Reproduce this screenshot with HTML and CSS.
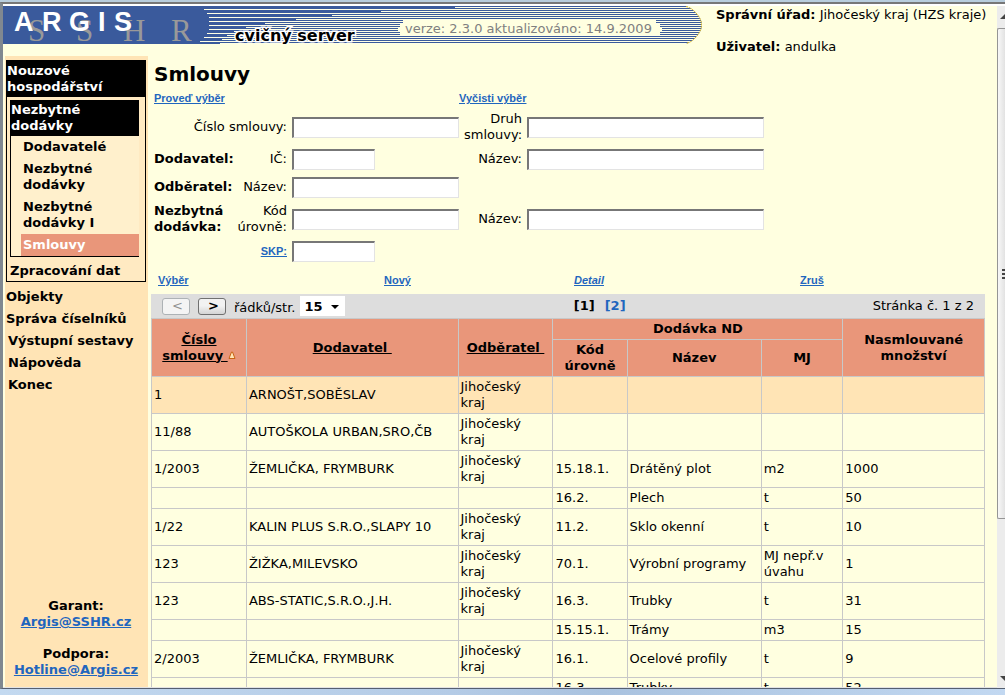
FILE: index.html
```html
<!DOCTYPE html>
<html lang="cs">
<head>
<meta charset="utf-8">
<title>ARGIS – Smlouvy</title>
<link rel="stylesheet" href="styles.css">
</head>
<body>
<div class="window">
  <div class="frame">
    <div class="page">
      <header class="header">
        <svg class="banner" width="700" height="38" viewBox="3 6 700 38" role="img" aria-label="ARGIS SSHR">
          <defs>
            <clipPath id="shape"><path d="M3 6H686Q692 8 696 13Q702 19 702 25Q702 31 696 37Q692 42 686 44H3Z"/></clipPath>
          </defs>
          <g clip-path="url(#shape)">
            <rect x="3" y="6" width="700" height="38" fill="#3a5a9c"/>
            <path stroke="#ffffe6" shape-rendering="crispEdges" d="M455 7.5H702M204 9.5H702M381 11.5H702M207 13.5H702M332 15.5H702M209 17.5H702M296 19.5H702M209 21.5H702M265 23.5H702M209 25.5H702M246 27.5H702M209 29.5H702M234 31.5H702M207 33.5H702M227 35.5H702M204 37.5H702M222 39.5H702M200 41.5H702M220 43.5H702"/>
          </g>
          <path d="M686 6.5Q692 8 696 13Q701.500 19 701.500 25Q701.500 31 696 37Q692 42 686 43.500" fill="none" stroke="#e8c020" stroke-dasharray="2 1"/>
          <path d="M403 20H656V24H660V27H662V31H660V35H400V31H398V27H400V24H403Z" fill="#ffffe0"/>
          <text class="sshr" x="28 76 123 171" y="41">SSHR</text>
          <text class="argis" x="14 42 69 98 114" y="31">ARGIS</text>
          <text class="training" x="235" y="41">cvičný server</text>
          <text class="version" x="405" y="33">verze: 2.3.0 aktualizováno: 14.9.2009</text>
        </svg>
        <div class="account">
          <p><b>Správní úřad:</b> Jihočeský kraj (HZS kraje)</p>
          <p><b>Uživatel:</b> andulka</p>
        </div>
      </header>
      <div class="columns">
        <aside class="sidebar">
          <nav>
            <div class="group">
              <div class="group-title">Nouzové hospodářství</div>
              <div class="subgroup">
                <div class="group-title">Nezbytné dodávky</div>
                <ul class="submenu">
                  <li><a href="#">Dodavatelé</a></li>
                  <li><a href="#">Nezbytné dodávky</a></li>
                  <li><a href="#">Nezbytné dodávky I</a></li>
                  <li><a class="current" href="#">Smlouvy</a></li>
                </ul>
              </div>
              <a class="group-link" href="#">Zpracování dat</a>
            </div>
            <ul class="menu">
              <li><a href="#">Objekty</a></li>
              <li><a href="#">Správa číselníků</a></li>
              <li><a class="leaf" href="#">Výstupní sestavy</a></li>
              <li><a class="leaf" href="#">Nápověda</a></li>
              <li><a class="leaf" href="#">Konec</a></li>
            </ul>
          </nav>
          <div class="contacts">
            <p>Garant:<br><a href="#">Argis@SSHR.cz</a></p>
            <p>Podpora:<br><a href="#">Hotline@Argis.cz</a></p>
          </div>
        </aside>
        <main class="content">
          <h1>Smlouvy</h1>
          <form class="search">
            <div class="search-actions">
              <a class="action" href="#">Proveď výběr</a>
              <a class="action" href="#">Vyčisti výběr</a>
            </div>
            <div class="row tall">
              <label class="wide-label" for="cislo">Číslo smlouvy:</label>
              <input id="cislo" type="text">
              <label for="druh">Druh smlouvy:</label>
              <input id="druh" class="long" type="text">
            </div>
            <div class="row">
              <b>Dodavatel:</b>
              <label for="ic">IČ:</label>
              <input id="ic" class="short" type="text">
              <label for="dodavatel">Název:</label>
              <input id="dodavatel" class="long" type="text">
            </div>
            <div class="row">
              <b>Odběratel:</b>
              <label for="odberatel">Název:</label>
              <input id="odberatel" type="text">
            </div>
            <div class="row tall">
              <b>Nezbytná dodávka:</b>
              <label for="kod">Kód úrovně:</label>
              <input id="kod" type="text">
              <label for="dodavka">Název:</label>
              <input id="dodavka" class="long" type="text">
            </div>
            <div class="row">
              <label class="wide-label" for="skp"><a class="action" href="#">SKP:</a></label>
              <input id="skp" class="short" type="text">
            </div>
          </form>
          <section class="listing">
            <div class="list-actions">
              <a class="action" href="#">Výběr</a>
              <a class="action" href="#">Nový</a>
              <a class="action detail" href="#">Detail</a>
              <a class="action" href="#">Zruš</a>
            </div>
            <div class="pager">
              <div class="pager-left">
                <button type="button" disabled>&lt;</button>
                <button type="button">&gt;</button>
                <label for="rows">řádků/str.</label>
                <span class="select"><select id="rows"><option>15</option><option>30</option></select></span>
              </div>
              <div class="pages"><b>[1]</b><a href="#">[2]</a></div>
              <div class="count">Stránka č. 1 z 2</div>
            </div>
            <table class="grid">
              <colgroup><col class="c1"><col class="c2"><col class="c3"><col class="c4"><col class="c5"><col class="c6"><col class="c7"></colgroup>
              <thead>
                <tr>
                  <th rowspan="2"><a href="#">Číslo smlouvy&nbsp;</a><svg class="sort" width="8" height="9" viewBox="0 0 8 9"><path d="M3.500 1L1 7.500H7L4.500 1Z" fill="#ffe4b5" stroke="#c86414"/></svg></th>
                  <th rowspan="2"><a href="#">Dodavatel&nbsp;</a></th>
                  <th rowspan="2"><a href="#">Odběratel&nbsp;</a></th>
                  <th colspan="3">Dodávka ND</th>
                  <th rowspan="2">Nasmlouvané množství</th>
                </tr>
                <tr><th>Kód úrovně</th><th>Název</th><th>MJ</th></tr>
              </thead>
              <tbody>
                <tr class="selected"><td>1</td><td>ARNOŠT,SOBĚSLAV</td><td>Jihočeský kraj</td><td></td><td></td><td></td><td></td></tr>
                <tr><td>11/88</td><td>AUTOŠKOLA URBAN,SRO,ČB</td><td>Jihočeský kraj</td><td></td><td></td><td></td><td></td></tr>
                <tr><td>1/2003</td><td>ŽEMLIČKA, FRYMBURK</td><td>Jihočeský kraj</td><td>15.18.1.</td><td>Drátěný plot</td><td>m2</td><td>1000</td></tr>
                <tr><td></td><td></td><td></td><td>16.2.</td><td>Plech</td><td>t</td><td>50</td></tr>
                <tr><td>1/22</td><td>KALIN PLUS S.R.O.,SLAPY 10</td><td>Jihočeský kraj</td><td>11.2.</td><td>Sklo okenní</td><td>t</td><td>10</td></tr>
                <tr><td>123</td><td>ŽIŽKA,MILEVSKO</td><td>Jihočeský kraj</td><td>70.1.</td><td>Výrobní programy</td><td>MJ nepř.v úvahu</td><td>1</td></tr>
                <tr><td>123</td><td>ABS-STATIC,S.R.O.,J.H.</td><td>Jihočeský kraj</td><td>16.3.</td><td>Trubky</td><td>t</td><td>31</td></tr>
                <tr><td></td><td></td><td></td><td>15.15.1.</td><td>Trámy</td><td>m3</td><td>15</td></tr>
                <tr><td>2/2003</td><td>ŽEMLIČKA, FRYMBURK</td><td>Jihočeský kraj</td><td>16.1.</td><td>Ocelové profily</td><td>t</td><td>9</td></tr>
                <tr><td></td><td></td><td></td><td>16.3.</td><td>Trubky</td><td>t</td><td>52</td></tr>
              </tbody>
            </table>
          </section>
        </main>
      </div>
    </div>
    <div class="scrollbar">
      <svg width="8" height="22" viewBox="0 0 8 22"><path d="M3 13L8 8V13Z" fill="#444"/></svg>
      <div class="thumb"><svg width="3" height="10" viewBox="0 0 3 10"><path d="M0 1H3M0 5H3M0 9H3" stroke="#444" stroke-width="2"/></svg></div>
      <svg class="down" width="8" height="16" viewBox="0 0 8 16"><path d="M3 4L8 9V4Z" fill="#444"/></svg>
    </div>
  </div>
  <div class="desktop"></div>
</div>
</body>
</html>
```
FILE: styles.css
```css
* { box-sizing: border-box; }

body {
  margin: 0;
  background: #ffffe0;
  color: #000;
  font: 13px/16px Verdana, "DejaVu Sans", sans-serif;
}

p, ul, h1 { margin: 0; padding: 0; }
ul { list-style: none; }
a { color: #1f66be; }

.window {
  display: flex;
  flex-direction: column;
  height: 100vh;
  overflow: hidden;
  border-top: 2px solid #b8cddd;
}

.frame {
  display: flex;
  flex: 1;
  min-height: 0;
  border-top: 2px solid #777;
  border-left: 3px solid #808890;
  border-bottom: 1px solid #555f70;
}

.page {
  display: flex;
  flex-direction: column;
  flex: 1;
  min-width: 0;
  border-top: 2px solid #fff;
  border-bottom: 1px solid #e3e3e3;
  overflow: hidden;
}

.desktop {
  height: 6px;
  background: linear-gradient(90deg, #c3d9f0, #b4cbe6 45%, #a9c2df 60%, #c2d8f1);
}

/* Header */
.header { display: flex; height: 50px; }
.banner { flex: none; }
.argis { font: bold 27px "Liberation Sans", Arial, sans-serif; fill: #fff; }
.sshr { font: 31px "Liberation Serif", "Times New Roman", serif; fill: #999; }
.training {
  font: bold 16px "DejaVu Sans", Verdana, sans-serif;
  fill: #000;
  stroke: #fff;
  stroke-width: 3px;
  paint-order: stroke;
}
.version { font: 13px Verdana, "DejaVu Sans", sans-serif; fill: #808080; }
.account { padding: 1px 0 0 13px; white-space: nowrap; }
.account p + p { margin-top: 16px; }

/* Sidebar */
.columns { display: flex; flex: 1; min-height: 0; }

.sidebar {
  display: flex;
  flex-direction: column;
  flex: none;
  width: 143px;
  margin-left: 2px;
  padding: 4px 2px 9px 1px;
  background: #ffe4b5;
  font-weight: bold;
}

.sidebar nav a { display: block; color: #000; text-decoration: none; }

.group { border: 1px solid #000; background: #ffeac2; }
.group-title { padding: 2px 0; background: #000; color: #fff; }
.subgroup {
  margin: 3px 6px 0 3px;
  border: solid #000;
  border-width: 0 0 1px 1px;
  background: #fff0cc;
}
.submenu { padding-left: 10px; }
.submenu a { padding: 3px 2px; }
.submenu .current { background: #e9967a; color: #fff; }
.sidebar .group-link { padding: 6px 3px 2px; }
.menu { padding-top: 4px; }
.menu a { padding: 3px 0; }
.menu .leaf { padding-left: 2px; }

.contacts { margin-top: auto; text-align: center; }
.contacts p + p { margin-top: 16px; }

/* Search form */
.content { flex: 1; min-width: 0; padding: 6px 12px 0 3px; }
h1 { padding-left: 3px; font-size: 20px; line-height: 24px; }

.action {
  font: bold 11px/16px "Liberation Sans", Arial, sans-serif;
}

.search { padding-left: 3px; }
.search-actions {
  display: grid;
  grid-template-columns: 305px 1fr;
  padding: 4px 0 3px;
}
.row {
  display: grid;
  grid-template-columns: 75px 53px 167px 58px 1fr;
  column-gap: 5px;
  align-items: center;
  min-height: 28px;
}
.tall { min-height: 36px; }
.row label { text-align: right; }
.row .wide-label { grid-column: span 2; }
.row input {
  width: 167px;
  height: 21px;
  border: solid;
  border-width: 2px 1px 1px 2px;
  border-color: #777 #e3e3e3 #e3e3e3 #777;
  background: #fff;
  font: inherit;
}
.row .short { width: 83px; }
.row .long { width: 237px; }

/* Listing */
.list-actions {
  display: grid;
  grid-template-columns: 226fr 190fr 226fr 185fr;
  padding: 7px 0 6px 7px;
}
.list-actions a { justify-self: start; }
.detail { font-style: italic; }

.pager {
  display: grid;
  grid-template-columns: 13fr auto 11fr;
  align-items: center;
  height: 24px;
  padding: 0 11px;
  background: #ddd;
}
.pager-left { display: flex; align-items: center; }
.pager button {
  width: 28px;
  height: 17px;
  margin-right: 8px;
  padding: 0 0 0 3px;
  border: 1px solid #707070;
  border-radius: 3px;
  background: linear-gradient(#f2f2f2 45%, #d4d4d4);
  color: #000;
  font: bold 13px/14px Verdana, "DejaVu Sans", sans-serif;
}
.pager button:disabled { border-color: #adb2b5; background: #f4f4f4; color: #909090; font-weight: normal; }
.pager label { padding-top: 4px; }
.select { position: relative; margin-left: 5px; }
.select::after {
  content: "";
  position: absolute;
  top: 9px;
  right: 6px;
  border: 4px solid transparent;
  border-top-color: #000;
  pointer-events: none;
}
.select select {
  display: block;
  width: 45px;
  height: 20px;
  padding: 0 4px;
  appearance: none;
  border: 0;
  background: #fff;
  color: #000;
  font: bold 13px Verdana, "DejaVu Sans", sans-serif;
}
.pages { display: flex; gap: 10px; font-weight: bold; }
.pages a { text-decoration: none; }
.count { text-align: right; }

.grid { width: 100%; border-collapse: collapse; table-layout: fixed; }
.c1 { width: 11.400%; }
.c2 { width: 25.400%; }
.c3 { width: 11.400%; }
.c4 { width: 8.900%; }
.c5 { width: 16.100%; }
.c6 { width: 9.800%; }
.c7 { width: 17%; }
.grid th, .grid td { height: 21px; padding: 2px; border: 1px solid #c8c8c8; }
.grid th { background: #e9967a; }
.grid th a { color: #000; }
.grid td { padding-right: 8px; text-align: left; }
.selected { background: #ffe4b5; }

/* Scrollbar */
.scrollbar {
  display: flex;
  flex-direction: column;
  flex: none;
  width: 8px;
  border-top: 2px solid #fff;
  background: #ececec;
}
.thumb {
  display: flex;
  align-items: center;
  justify-content: flex-end;
  height: 491px;
  border: 1px solid #959595;
  border-right: 0;
  border-radius: 2px 0 0 2px;
  background: linear-gradient(90deg, #f8f8f8, #e2e2e2);
}
.down { margin-top: auto; }
```
